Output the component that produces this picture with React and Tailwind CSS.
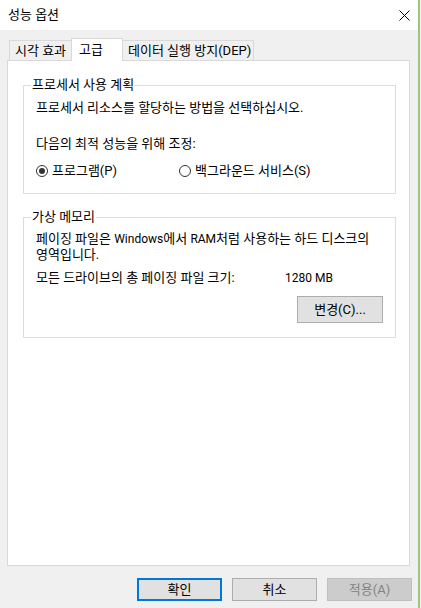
import React from "react";

function Radio({ checked, label, className }) {
  return (
    <div className={"flex items-center " + (className || "")}>
      <span className="w-[12px] h-[12px] rounded-full border border-[#333333] flex items-center justify-center bg-white">
        {checked && <span className="w-[6px] h-[6px] rounded-full bg-[#333333]" />}
      </span>
      <span className="ml-[4px]">{label}</span>
    </div>
  );
}

function Button({ children, variant }) {
  const styles = {
    primary: "border-2 border-[#0078d7] bg-[#e1e1e1] text-black",
    normal: "border border-[#adadad] bg-[#e1e1e1] text-black",
    disabled: "border border-[#bfbfbf] bg-[#cccccc] text-[#838383]",
  };
  return (
    <div className={"w-[85px] h-[23px] flex items-center justify-center " + styles[variant]}>
      {children}
    </div>
  );
}

export default function App() {
  return (
    <div className="w-[421px] h-[608px] flex bg-[#f0f0f0] text-[13px] leading-[16px] text-black font-['Roboto','Noto_Sans_CJK_KR',sans-serif] overflow-hidden">
      <div className="w-[418px] flex flex-col">
        {/* title bar */}
        <div className="h-[30px] shrink-0 bg-white flex items-center justify-between pl-[8px] pr-[8px]">
          <span className="-mt-[1px]">성능 옵션</span>
          <svg width="11" height="11" viewBox="0 0 11 11">
            <path d="M0.5 0.5L10.5 10.5M10.5 0.5L0.5 10.5" stroke="#000" strokeWidth="1" />
          </svg>
        </div>

        {/* body */}
        <div className="flex-1 pt-[8px] pl-[7px]">
          <div className="w-[403px]">
            {/* tabs */}
            <div className="flex items-end pl-[2px] h-[22px]">
              <div className="w-[63px] h-[20px] border-t border-l border-r border-[#d9d9d9] bg-[#f0f0f0] flex items-center pl-[5px]">
                시각 효과
              </div>
              <div className="relative z-10 -ml-px w-[52px] h-[23px] -mb-px border-t border-l border-r border-[#d9d9d9] bg-white flex items-center pl-[7px]">
                고급
              </div>
              <div className="-ml-px w-[132px] h-[20px] border-t border-l border-r border-[#d9d9d9] bg-[#f0f0f0] flex items-center pl-[5px]">
                데이터 실행 방지(DEP)
              </div>
            </div>

            {/* tab page */}
            <div className="h-[506px] border border-[#d9d9d9] bg-white">
              <fieldset className="ml-[15px] mt-[16px] w-[373px] border border-[#dcdcdc] p-0 pb-[14px]">
                <legend className="ml-[7px] px-[1px]">프로세서 사용 계획</legend>
                <div className="pl-[12px]">
                  <div className="mt-[7px]">프로세서 리소스를 할당하는 방법을 선택하십시오.</div>
                  <div className="mt-[20px]">다음의 최적 성능을 위해 조정:</div>
                  <div className="mt-[11px] flex">
                    <Radio checked label="프로그램(P)" className="w-[143px]" />
                    <Radio label="백그라운드 서비스(S)" />
                  </div>
                </div>
              </fieldset>

              <fieldset className="ml-[15px] mt-[15px] w-[373px] border border-[#dcdcdc] p-0 pb-[14px]">
                <legend className="ml-[7px] px-[1px]">가상 메모리</legend>
                <div className="pl-[12px]">
                  <div className="mt-[6px] leading-[15px]">
                    페이징 파일은 <span className="text-[12px]">Windows</span>에서 <span className="text-[12px]">RAM</span>처럼 사용하는 하드 디스크의
                    <br />
                    영역입니다.
                  </div>
                  <div className="mt-[8px] flex">
                    <span className="w-[249px]">모든 드라이브의 총 페이징 파일 크기:</span>
                    <span className="text-[12px]">1280 MB</span>
                  </div>
                </div>
                <div className="mt-[10px] flex justify-end pr-[12px]">
                  <div className="w-[86px] h-[27px] border border-[#adadad] bg-[#e1e1e1] flex items-center justify-center">
                    변경(C)...
                  </div>
                </div>
              </fieldset>
            </div>
          </div>

          {/* dialog buttons */}
          <div className="mt-[12px] flex gap-[10px] pl-[130px]">
            <Button variant="primary">확인</Button>
            <Button variant="normal">취소</Button>
            <Button variant="disabled">적용(A)</Button>
          </div>
        </div>
      </div>
      <div className="w-[2px] bg-[#9fc47c]" />
      <div className="w-[1px] bg-[#f4f4f4]" />
    </div>
  );
}
